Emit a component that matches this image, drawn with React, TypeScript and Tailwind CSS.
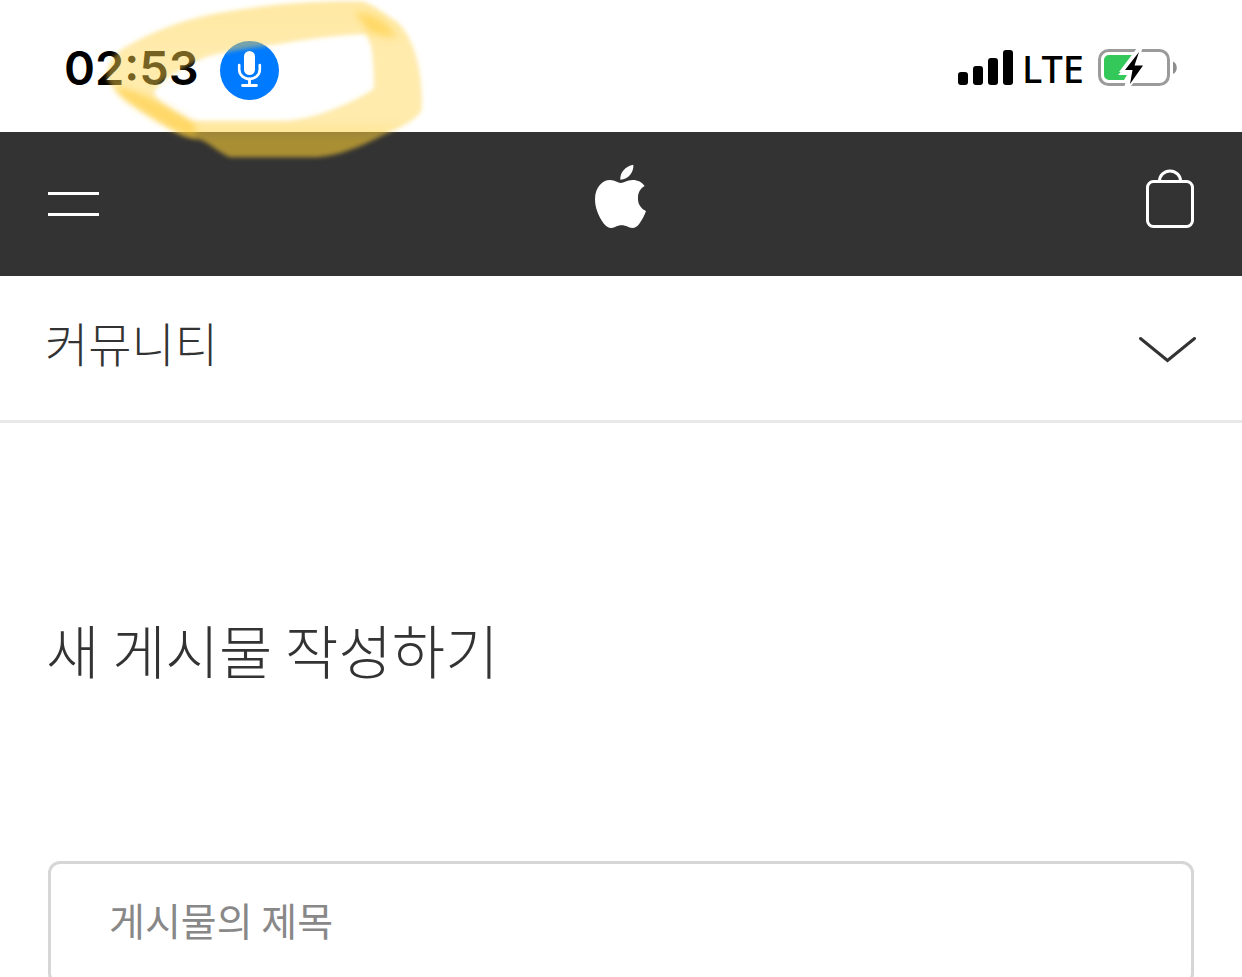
import React, { useState } from "react";

const MicIcon: React.FC = () => (
    <svg viewBox="0 0 59 59" className="w-full h-full" fill="none" stroke="white" strokeLinecap="round" aria-hidden="true">
        <rect x="24" y="10" width="11" height="24" rx="5.5" fill="white" stroke="none" />
        <path d="M19.2 24v4.500a10.300 9.500 0 0 0 20.600 0V24" strokeWidth="2.6" />
        <path d="M29.500 38v6.500M22.500 44.500h14" strokeWidth="2.8" />
    </svg>
);

const SignalIcon: React.FC = () => (
    <svg viewBox="0 0 56 36" className="w-14 h-9" aria-hidden="true">
        <rect x="0" y="22" width="10" height="13" rx="3" />
        <rect x="15" y="16" width="10" height="19" rx="3" />
        <rect x="30" y="8" width="10" height="27" rx="3" />
        <rect x="45" y="0" width="10" height="35" rx="3" />
    </svg>
);

const BatteryIcon: React.FC = () => (
    <svg viewBox="0 0 80 40" className="w-20 h-10" aria-hidden="true">
        <rect x="1.5" y="2.5" width="69" height="34" rx="9" fill="none" stroke="#9b9b9b" strokeWidth="3" />
        <path d="M75 13.500c5 2 5 10.500 0 12.500z" fill="#8e8e8e" />
        <path d="M11 7h27L20 27h9l-3 5H11a5 5 0 0 1-5-5V12a5 5 0 0 1 5-5Z" fill="#34c759" />
        <path d="M39 0 21 24h9.500L26 40h5.500l17.500-23.500H39.500l5-16.500z" fill="white" />
        <path d="M41 4 27 22h7.500L32 36l13-18.500h-8.500z" fill="black" />
    </svg>
);

const AppleLogo: React.FC = () => (
    <svg viewBox="75 42 159 195" className="w-[53px] h-[65px]" fill="white" aria-hidden="true">
        <path d="M190 44C192 66 176 87 151 89C149 68 166 48 190 44Z" />
        <path d="M152 99C163 99 170 90 188 90C204 90 216 97 224 108C210 116 203 129 204 147C204 163 213 176 228 183C223 198 216 210 208 221C201 230 195 234 187 234C175 234 170 226 155 226C140 226 136 234 124 234C115 234 108 229 100 219C85 199 75 172 75 148C75 112 97 90 120 90C135 90 144 99 152 99Z" />
    </svg>
);

const BagIcon: React.FC = () => (
    <svg viewBox="0 0 48 60" className="w-12 h-[60px]" fill="none" stroke="white" strokeWidth="3" aria-hidden="true">
        <rect x="1.500" y="13.500" width="45" height="45" rx="6" />
        <path d="M13.500 13a10.500 10 0 0 1 21 0" />
    </svg>
);

// Hand drawn marker loop around the microphone badge
const MarkerLoop: React.FC = () => (
    <svg viewBox="0 0 1200 540" className="absolute left-10 top-0 w-[400px] h-[180px] pointer-events-none" aria-hidden="true">
        <defs>
            <filter id="soft" x="-10%" y="-10%" width="120%" height="120%">
                <feGaussianBlur stdDeviation="7" />
            </filter>
            <filter id="softer" x="-30%" y="-30%" width="160%" height="160%">
                <feGaussianBlur stdDeviation="11" />
            </filter>
            <linearGradient id="ink" x1="0" y1="0" x2="0" y2="1">
                <stop offset="0" stopColor="#ffd24a" stopOpacity="0.5" />
                <stop offset="0.3" stopColor="#ffd24a" stopOpacity="0.46" />
                <stop offset="0.76" stopColor="#ffd24a" stopOpacity="0.46" />
                <stop offset="0.9" stopColor="#ffd034" stopOpacity="0.58" />
            </linearGradient>
        </defs>
        <path
            filter="url(#soft)"
            fill="url(#ink)"
            fillRule="evenodd"
            d="M200 235C200 200 215 165 255 142C330 98 420 62 530 40C680 14 800 2 965 4C1000 12 1030 40 1075 68C1125 120 1150 220 1145 330C1130 362 1080 382 1020 410C960 440 900 466 830 472H570C530 455 505 425 475 418C440 418 405 396 375 378C315 341 230 295 200 235ZM342 280C350 245 440 195 500 170C580 148 660 142 740 128C820 115 890 106 975 102C1000 130 1000 180 1003 265C960 298 830 358 740 362H455C420 345 345 302 342 280Z"
        />
        <g filter="url(#softer)">
            <path d="M225 260C290 267 390 320 465 372L470 405C440 410 370 375 325 345C280 315 235 290 225 260Z" fill="#ffc92e" fillOpacity="0.55" />
            <path d="M945 36C1000 38 1045 65 1070 112C1040 112 1000 102 985 95Z" fill="#ffc92e" fillOpacity="0.5" />
        </g>
    </svg>
);

const NewPostPage: React.FC = () => {
    const [title, setTitle] = useState("");

    return (
        <div className="relative flex flex-col h-screen overflow-hidden bg-white text-[#333333] font-['Noto_Sans_CJK_KR',sans-serif]">
            {/* Status bar */}
            <div className="flex shrink-0 items-center justify-between h-[132px] px-16 pt-2 text-black font-['Inter',sans-serif]">
                <div className="flex items-center gap-[21px]">
                    <span className="pb-1 text-[47px] leading-[60px] font-semibold">02:53</span>
                    <span className="w-[59px] h-[59px] rounded-full bg-[#007aff]">
                        <MicIcon />
                    </span>
                </div>
                <div className="flex items-center pb-1">
                    <SignalIcon />
                    <span className="ml-2 mr-3.5 text-[38px] leading-[44px] font-medium font-['Noto_Sans',sans-serif]">LTE</span>
                    <BatteryIcon />
                </div>
            </div>

            {/* Global nav */}
            <header className="flex shrink-0 items-center justify-between h-36 px-12 pb-3 bg-[#333333]">
                <button type="button" aria-label="메뉴" className="flex flex-col gap-[18px] w-[51px] pt-3">
                    <span className="w-full h-[3px] bg-white" />
                    <span className="w-full h-[3px] bg-white" />
                </button>
                <a href="#" aria-label="Apple" className="pb-1">
                    <AppleLogo />
                </a>
                <button type="button" aria-label="장바구니" className="flex justify-end w-[51px]">
                    <BagIcon />
                </button>
            </header>

            {/* Local nav */}
            <nav className="flex shrink-0 items-center justify-between h-[147px] pl-[45px] pr-[46px] border-b-[3px] border-[#e8e8e8]">
                <a href="#" className="pb-3 text-[47px] leading-[64px] font-light">커뮤니티</a>
                <button type="button" aria-label="메뉴 열기" className="pt-1">
                    <svg viewBox="0 0 57 28" className="w-[57px] h-7" fill="none" stroke="#333333" strokeWidth="3" aria-hidden="true">
                        <path d="M1.500 2.500 28.500 24.500 55.500 2.500" strokeLinecap="round" />
                    </svg>
                </button>
            </nav>

            <main className="flex flex-col shrink-0 px-12">
                <h1 className="-ml-0.5 mt-[184px] text-[58px] leading-[84px] font-light">새 게시물 작성하기</h1>
                <input
                    type="text"
                    name="title"
                    aria-label="게시물의 제목"
                    placeholder="게시물의 제목"
                    value={title}
                    onChange={(e) => setTitle(e.target.value)}
                    className="mt-[170px] w-full h-[124px] px-[58px] pb-2 border-[3px] border-[#d6d6d6] rounded-xl text-[39px] font-normal placeholder:text-[#888888] outline-none"
                />
            </main>

            <MarkerLoop />
        </div>
    );
};

export default NewPostPage;
